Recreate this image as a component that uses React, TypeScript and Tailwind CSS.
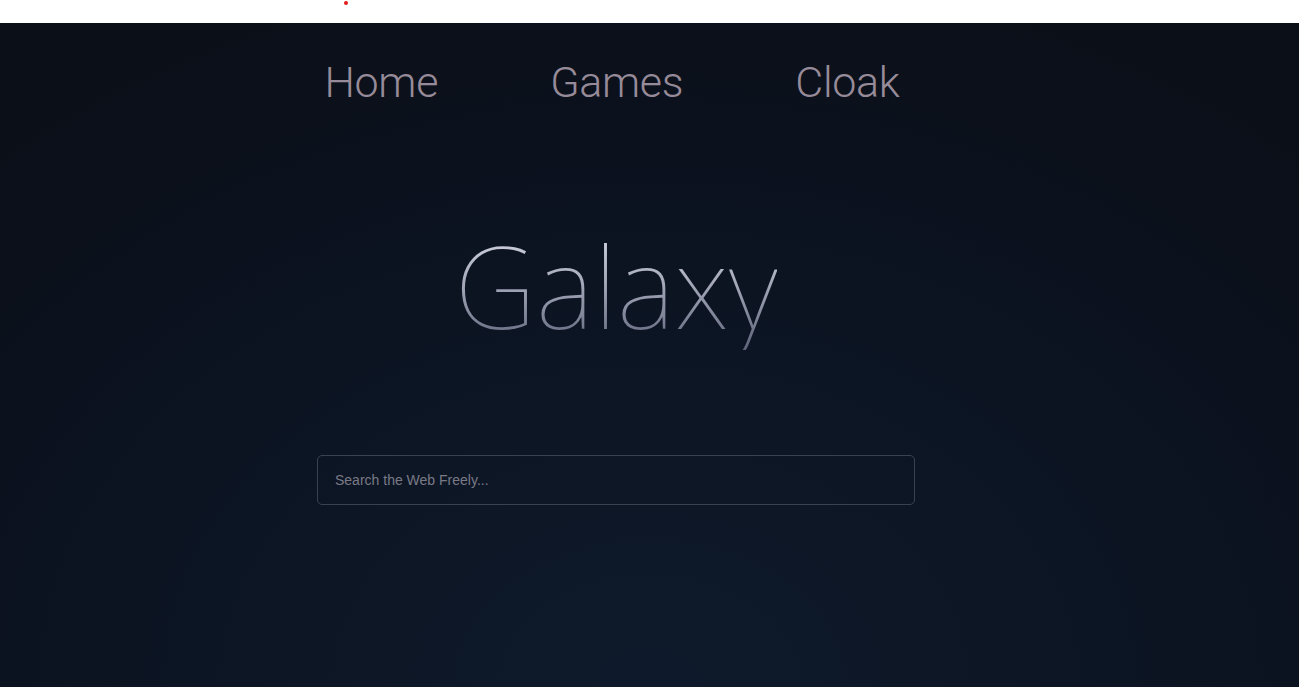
import React from "react";

export default function App() {
  return (
    <div className="min-h-screen w-full flex flex-col bg-white">
      <div className="h-[23px] w-full bg-white pl-[344px] pt-[1px] shrink-0">
        <div className="w-[4px] h-[4px] rounded-full bg-[#e31b1b]" />
      </div>
      <div className="h-[664px] w-full bg-[radial-gradient(ellipse_75%_110%_at_50%_100%,#0e1a2b_0%,#0c1422_55%,#0b0f18_100%)] pl-[317px]">
        <div className="w-[598px] flex flex-col items-center">
          <nav className="flex gap-[112px] pt-[29px] pr-[8px] font-['Roboto',sans-serif] font-light text-[43px] leading-[60px] text-[#978b99] tracking-[-0.3px]">
            <a>Home</a>
            <a>Games</a>
            <a>Cloak</a>
          </nav>
          <h1 className="mt-[108px] font-['Noto_Sans',sans-serif] font-thin text-[113px] leading-[130px] bg-gradient-to-b from-[#dfe1ea] via-[#a3a7b8] to-[#5d6278] bg-clip-text text-transparent">
            Galaxy
          </h1>
          <div className="mt-[105px] w-[598px] h-[50px] rounded-[5px] border border-[#3a4252] flex items-center px-[17px]">
            <input
              className="w-full bg-transparent outline-none font-['Liberation_Sans',Arial,sans-serif] text-[14px] text-[#c0c0c8] placeholder:text-[#7a7a86]"
              placeholder="Search the Web Freely..."
            />
          </div>
        </div>
      </div>
    </div>
  );
}
